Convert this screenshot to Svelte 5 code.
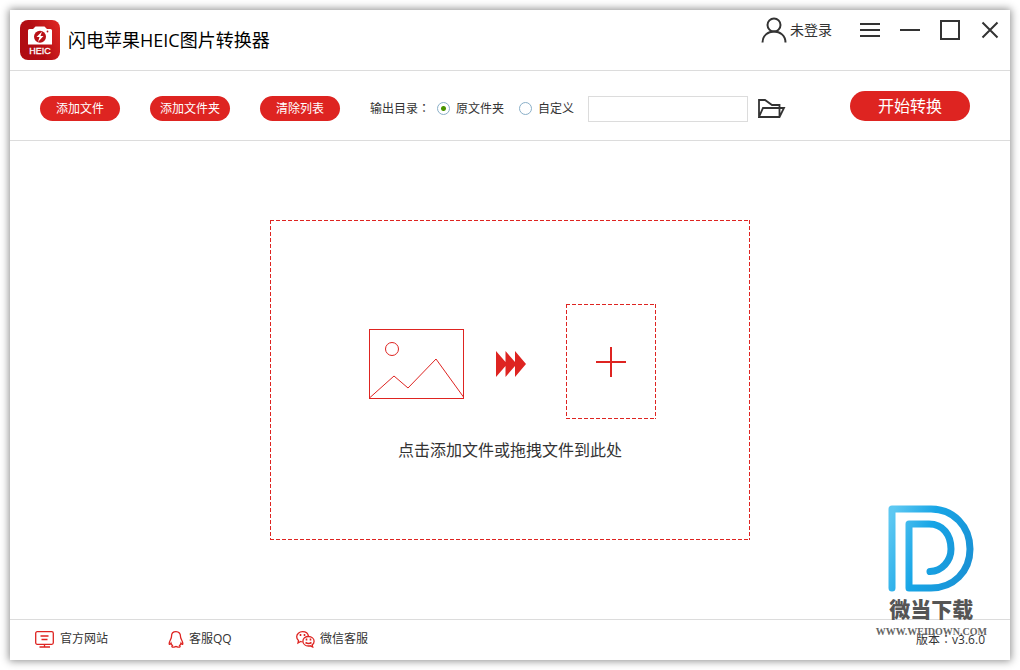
<script>
  let output = $state('source');
  let customPath = $state('');

  const actions = ['添加文件', '添加文件夹', '清除列表'];
</script>

<div class="window">
  <header class="titlebar">
    <svg class="logo" viewBox="0 0 40 40" aria-hidden="true">
      <defs>
        <linearGradient id="logo-red" x1="0" y1="0.6" x2="1" y2="0.2">
          <stop offset="0" stop-color="#b00c13" />
          <stop offset="0.4" stop-color="#b30d13" />
          <stop offset="1" stop-color="#dc2622" />
        </linearGradient>
      </defs>
      <rect width="40" height="40" rx="8" fill="url(#logo-red)" />
      <path d="M9.500 9H13l2.500-2.500h9L27 9h3.500A1.500 1.500 0 0 1 32 10.500V24.500H8V10.500A1.500 1.500 0 0 1 9.500 9z" fill="#fff" />
      <circle cx="20" cy="16.800" r="6" fill="#b91016" />
      <path d="M22 11.500l-5.500 5.500h3l-1.500 5 5.500-6h-3z" fill="#fff" />
      <circle cx="27.500" cy="11.500" r="0.900" fill="#b91016" />
      <text x="20" y="34" text-anchor="middle">HEIC</text>
    </svg>
    <h1>闪电苹果HEIC图片转换器</h1>

    <div class="window-tools">
      <button class="login">
        <svg width="26" height="26" viewBox="0 0 26 26" aria-hidden="true">
          <circle cx="13" cy="8" r="6.500" />
          <path d="M1.500 25.500C1.500 18.500 7 14.500 13 14.500s11.500 4 11.500 11" />
        </svg>
        <span>未登录</span>
      </button>
      <button aria-label="菜单">
        <svg width="20" height="20" viewBox="0 0 20 20"><path d="M0 4h20M0 10h20M0 16h20" /></svg>
      </button>
      <button aria-label="最小化">
        <svg width="20" height="20" viewBox="0 0 20 20"><path d="M0 10h20" /></svg>
      </button>
      <button aria-label="最大化">
        <svg width="20" height="20" viewBox="0 0 20 20"><path d="M1 1h18v18H1z" /></svg>
      </button>
      <button aria-label="关闭">
        <svg width="20" height="20" viewBox="0 0 20 20"><path d="M2.500 2.500l15 15M17.500 2.500l-15 15" /></svg>
      </button>
    </div>
  </header>

  <div class="toolbar">
    <div class="actions">
      {#each actions as label}
        <button class="pill">{label}</button>
      {/each}
    </div>

    <div class="output" role="radiogroup" aria-labelledby="output-label">
      <span id="output-label">输出目录<span class="colon">：</span></span>
      <label><input type="radio" name="output" value="source" bind:group={output} />原文件夹</label>
      <label><input type="radio" name="output" value="custom" bind:group={output} />自定义</label>
    </div>

    <input class="path" type="text" aria-label="输出路径" bind:value={customPath} />
    <button class="browse" aria-label="选择文件夹">
      <svg width="28" height="20" viewBox="0 0 28 20">
        <path d="M1 18V1h6l7 5h7.500v12M1 18h20.500L26 9H5z" />
      </svg>
    </button>
    <button class="pill start">开始转换</button>
  </div>

  <main>
    <button class="dropzone dashed">
      <span class="steps">
        <svg class="photo" width="95" height="70" viewBox="0 0 95 70" aria-hidden="true">
          <rect x="0.500" y="0.500" width="94" height="69" />
          <circle cx="23" cy="20" r="6.500" />
          <path d="M1 68.500l24-21.500 14 12 28-29 27.500 38" />
        </svg>
        <svg class="arrows" width="30" height="26" viewBox="0 0 30 26" aria-hidden="true">
          <path d="M0 0l9.500 11V0l9.500 11V0l11 13-11 13V15l-9.500 11V15L0 26z" />
        </svg>
        <span class="target dashed">
          <svg width="30" height="30" viewBox="0 0 30 30" aria-hidden="true">
            <path d="M15 0v30M0 15h30" />
          </svg>
        </span>
      </span>
      <span class="hint">点击添加文件或拖拽文件到此处</span>
    </button>
  </main>

  <footer>
    <a href="#site">
      <svg width="20" height="18" viewBox="0 0 20 18" aria-hidden="true">
        <rect x="0.700" y="1.700" width="17.600" height="12.600" rx="1.500" />
        <path d="M5.500 6h8M6.500 9.500h6M9.500 14.500v2.500M4.500 17h10.500" />
      </svg>
      官方网站
    </a>
    <a href="#qq">
      <svg width="16" height="18" viewBox="0 0 16 18" aria-hidden="true">
        <path d="M8 1.700c-3 0-4.500 2-4.500 4.800 0 2.500-2.300 4.500-2.300 7 0 1.500 1 1 1.800-.3.200 1 .8 1.700 1.400 2.200-1 .8-.6 1.800 1 1.800 1.100 0 1.700-.7 2.600-.7s1.500.7 2.600.7c1.600 0 2-1 1-1.800.6-.5 1.200-1.200 1.400-2.200.8 1.300 1.800 1.800 1.800.3 0-2.500-2.300-4.500-2.300-7 0-2.800-1.500-4.800-4.500-4.800z" />
      </svg>
      客服QQ
    </a>
    <a href="#wechat">
      <svg width="19" height="18" viewBox="0 0 19 18" aria-hidden="true">
        <path d="M6.500 11.800c-.7 0-1.300-.1-1.900-.3L2 13l.5-2.500C1.300 9.500.7 8.200.7 6.800.7 4 3.300 1.700 6.500 1.700s5.600 2 6 4.600" />
        <path d="M12.500 6.500c3.200 0 5.600 2.100 5.600 4.700 0 1.500-.7 2.700-1.900 3.600l.5 2.200-2.300-1.200c-.6.2-1.200.2-1.900.2-3.200 0-5.600-2.100-5.600-4.800s2.400-4.700 5.600-4.700z" />
        <path class="eyes" d="M4.500 4v2M8.500 4v2M10.500 8.500v2M14.500 8.500v2M9.500 12.500q3 2 6 0" />
      </svg>
      微信客服
    </a>
    <span class="version">版本<span class="colon">：</span>v3.6.0</span>
  </footer>

  <div class="watermark">
    <svg width="86" height="88" viewBox="0 0 86 88" aria-hidden="true">
      <defs>
        <linearGradient id="mark-blue" gradientUnits="userSpaceOnUse" x1="0" y1="20" x2="86" y2="50">
          <stop offset="0" stop-color="#5dc8f2" />
          <stop offset="0.450" stop-color="#17a5e6" />
          <stop offset="1" stop-color="#1a92d5" />
        </linearGradient>
      </defs>
      <path d="M4 83V4h39c22 0 39 17 39 40S65 83 43 83H21V19h20c14 0 22 11 22 25 0 12-9 22-21 22.500" />
    </svg>
    <strong>微当下载</strong>
    <span>WWW.WEIDOWN.COM</span>
  </div>
</div>

<style>
  :global(body) {
    background: #fff;
  }

  .window {
    box-sizing: border-box;
    position: relative;
    display: flex;
    flex-direction: column;
    min-height: calc(100vh - 20px);
    margin: 10px;
    background: #fff;
    box-shadow: 0 0 8px 1px rgba(0, 0, 0, 0.45);
    color: #333;
    font: 12px/16px "Open Sans", "Noto Sans CJK SC", sans-serif;
  }

  button {
    padding: 0;
    border: 0;
    background: none;
    color: inherit;
    font: inherit;
    cursor: pointer;
  }

  svg {
    display: block;
    flex-shrink: 0;
    fill: none;
  }

  .colon {
    font-family: "Noto Sans CJK TC", sans-serif;
  }

  /* Four strips of 4px dashes, one per side */
  .dashed {
    --across: repeating-linear-gradient(90deg, #de2421 0 4px, transparent 4px 6px);
    --down: repeating-linear-gradient(180deg, #de2421 0 4px, transparent 4px 6px);
    background:
      var(--across) top / 100% 1px no-repeat,
      var(--across) bottom / 100% 1px no-repeat,
      var(--down) left / 1px 100% no-repeat,
      var(--down) right / 1px 100% no-repeat;
  }

  /* Title bar */
  .titlebar {
    display: flex;
    align-items: center;
    gap: 8px;
    height: 60px;
    padding: 0 10px;
    border-bottom: 1px solid #dcdcdc;
  }

  .logo {
    width: 40px;
    height: 40px;
  }

  .logo text {
    fill: #fff;
    stroke: #fff;
    stroke-width: 0.3;
    font: 9px "Liberation Sans", sans-serif;
  }

  h1 {
    margin: 0;
    color: #000;
    font-size: 18px;
    font-weight: 400;
    line-height: 24px;
  }

  .window-tools {
    display: flex;
    align-self: flex-start;
    align-items: center;
    gap: 20px;
    height: 40px;
    margin-left: auto;
  }

  .window-tools svg {
    stroke: #333;
    stroke-width: 2;
  }

  .login {
    display: flex;
    align-items: center;
    gap: 3px;
    margin-right: 8px;
    font-size: 14px;
  }

  /* Toolbar */
  .toolbar {
    box-sizing: border-box;
    display: flex;
    align-items: center;
    height: 70px;
    padding: 6px 40px 0 30px;
    border-bottom: 1px solid #dcdcdc;
  }

  .actions {
    display: flex;
    gap: 30px;
    margin-right: 30px;
  }

  .pill {
    width: 80px;
    height: 25px;
    border-radius: 15px;
    background: #de2421;
    color: #fff;
  }

  .output {
    display: flex;
    align-items: center;
    gap: 15px;
    margin-right: 14px;
    white-space: nowrap;
  }

  #output-label {
    margin-right: -8px;
  }

  label {
    display: flex;
    align-items: center;
    gap: 6px;
  }

  input[type='radio'] {
    appearance: none;
    width: 13px;
    height: 13px;
    margin: 0;
    border: 1px solid #8aafc8;
    border-radius: 50%;
    background: #fff;
  }

  input[type='radio']:checked {
    background: radial-gradient(circle, #4a9400 2px, #fff 3px);
  }

  .path {
    box-sizing: border-box;
    width: 160px;
    height: 26px;
    margin: 0 10px 0 0;
    border: 1px solid #dcdcdc;
  }

  .browse svg {
    stroke: #333;
    stroke-width: 1.8;
  }

  .start {
    width: 120px;
    height: 30px;
    margin: 0 0 6px auto;
    font-size: 16px;
  }

  /* Drop area */
  main {
    flex: 1;
    display: grid;
    place-items: center;
  }

  .dropzone {
    display: flex;
    flex-direction: column;
    align-items: center;
    gap: 20px;
    width: 480px;
    height: 320px;
    padding-top: 84px;
  }

  .steps {
    display: flex;
    align-items: center;
    gap: 32px;
    margin-left: 4px;
  }

  .photo,
  .arrows {
    margin-top: 4px;
  }

  .photo {
    stroke: #de2421;
  }

  .arrows {
    fill: #de2421;
  }

  .target {
    display: grid;
    place-items: center;
    width: 90px;
    height: 115px;
    margin-left: 8px;
  }

  .target svg {
    stroke: #de2421;
    stroke-width: 2;
  }

  .hint {
    font-size: 16px;
    line-height: 22px;
  }

  /* Footer */
  footer {
    box-sizing: border-box;
    display: flex;
    align-items: center;
    gap: 60px;
    height: 41px;
    padding: 0 25px 2px;
    border-top: 1px solid #dcdcdc;
  }

  footer a {
    display: flex;
    align-items: center;
    gap: 5px;
    min-width: 68px;
    color: inherit;
    text-decoration: none;
  }

  footer svg {
    stroke: #de2421;
    stroke-width: 1.3;
  }

  footer .eyes {
    stroke-width: 1.6;
  }

  .version {
    margin-left: auto;
  }

  /* Site mark over the lower right corner */
  .watermark {
    position: absolute;
    right: 23px;
    bottom: 22px;
    display: flex;
    flex-direction: column;
    align-items: center;
    color: #555;
    pointer-events: none;
  }

  .watermark path {
    stroke: url(#mark-blue);
    stroke-width: 7;
    stroke-linecap: round;
    stroke-linejoin: round;
  }

  .watermark strong {
    font-size: 21px;
    font-weight: 900;
    line-height: 33px;
  }

  .watermark span {
    font: bold 10px/12px "Liberation Serif", serif;
    color: #666;
  }
</style>
